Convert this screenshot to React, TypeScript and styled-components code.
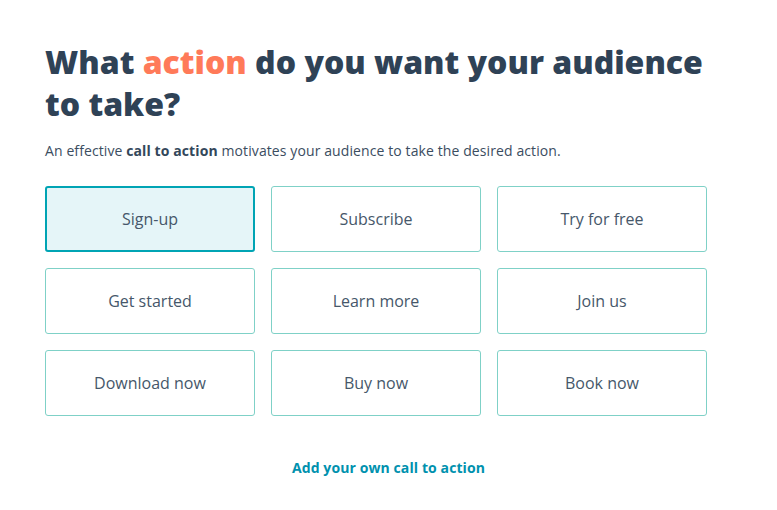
import React from "react";
import styled, { createGlobalStyle } from "styled-components";

const Global = createGlobalStyle`
  html, body { margin: 0; padding: 0; background: #ffffff; }
  body { font-family: "Open Sans", "Noto Sans", sans-serif; color: #33475b; }
`;

const Page = styled.main`
  width: 777px;
  height: 510px;
  box-sizing: border-box;
  padding: 41px 45px 0 45px;
  display: flex;
  flex-direction: column;
`;

const Heading = styled.h1`
  margin: 0;
  font-family: "Open Sans", sans-serif;
  font-weight: 800;
  font-size: 32px;
  line-height: 42px;
  letter-spacing: 0;
  color: #2f4256;
  width: 670px;
`;

const Accent = styled.span`
  color: #ff7a59;
`;

const Lead = styled.p`
  margin: 16px 0 0 0;
  font-size: 14px;
  line-height: 20px;
  font-weight: 400;
  color: #3b4d5f;
  letter-spacing: 0.1px;
`;

const Strong = styled.strong`
  font-weight: 700;
  color: #33475b;
`;

const Grid = styled.div`
  margin-top: 25px;
  display: grid;
  grid-template-columns: repeat(3, 210px);
  grid-auto-rows: 66px;
  gap: 16px;
`;

const Option = styled.button<{ $selected?: boolean }>`
  box-sizing: border-box;
  font-family: "Open Sans", sans-serif;
  font-size: 16px;
  font-weight: 400;
  color: #46576a;
  background: ${(p) => (p.$selected ? "#e5f5f8" : "#ffffff")};
  border: ${(p) => (p.$selected ? "2px solid #00a4b4" : "1px solid #7fd1c7")};
  border-radius: 3px;
  display: flex;
  align-items: center;
  justify-content: center;
  padding: 0;
  cursor: pointer;
`;

const Footer = styled.div`
  margin-top: 42px;
  display: flex;
  justify-content: center;
`;

const AddLink = styled.a`
  font-size: 14px;
  font-weight: 700;
  color: #0091ae;
  text-decoration: none;
  letter-spacing: 0.1px;
`;

const options = [
  "Sign-up",
  "Subscribe",
  "Try for free",
  "Get started",
  "Learn more",
  "Join us",
  "Download now",
  "Buy now",
  "Book now",
];

export default function App() {
  return (
    <>
      <Global />
      <Page>
        <Heading>
          What <Accent>action</Accent> do you want your audience to take?
        </Heading>
        <Lead>
          An effective <Strong>call to action</Strong> motivates your audience to take the desired action.
        </Lead>
        <Grid>
          {options.map((o, i) => (
            <Option key={o} $selected={i === 0}>
              {o}
            </Option>
          ))}
        </Grid>
        <Footer>
          <AddLink href="#">Add your own call to action</AddLink>
        </Footer>
      </Page>
    </>
  );
}
